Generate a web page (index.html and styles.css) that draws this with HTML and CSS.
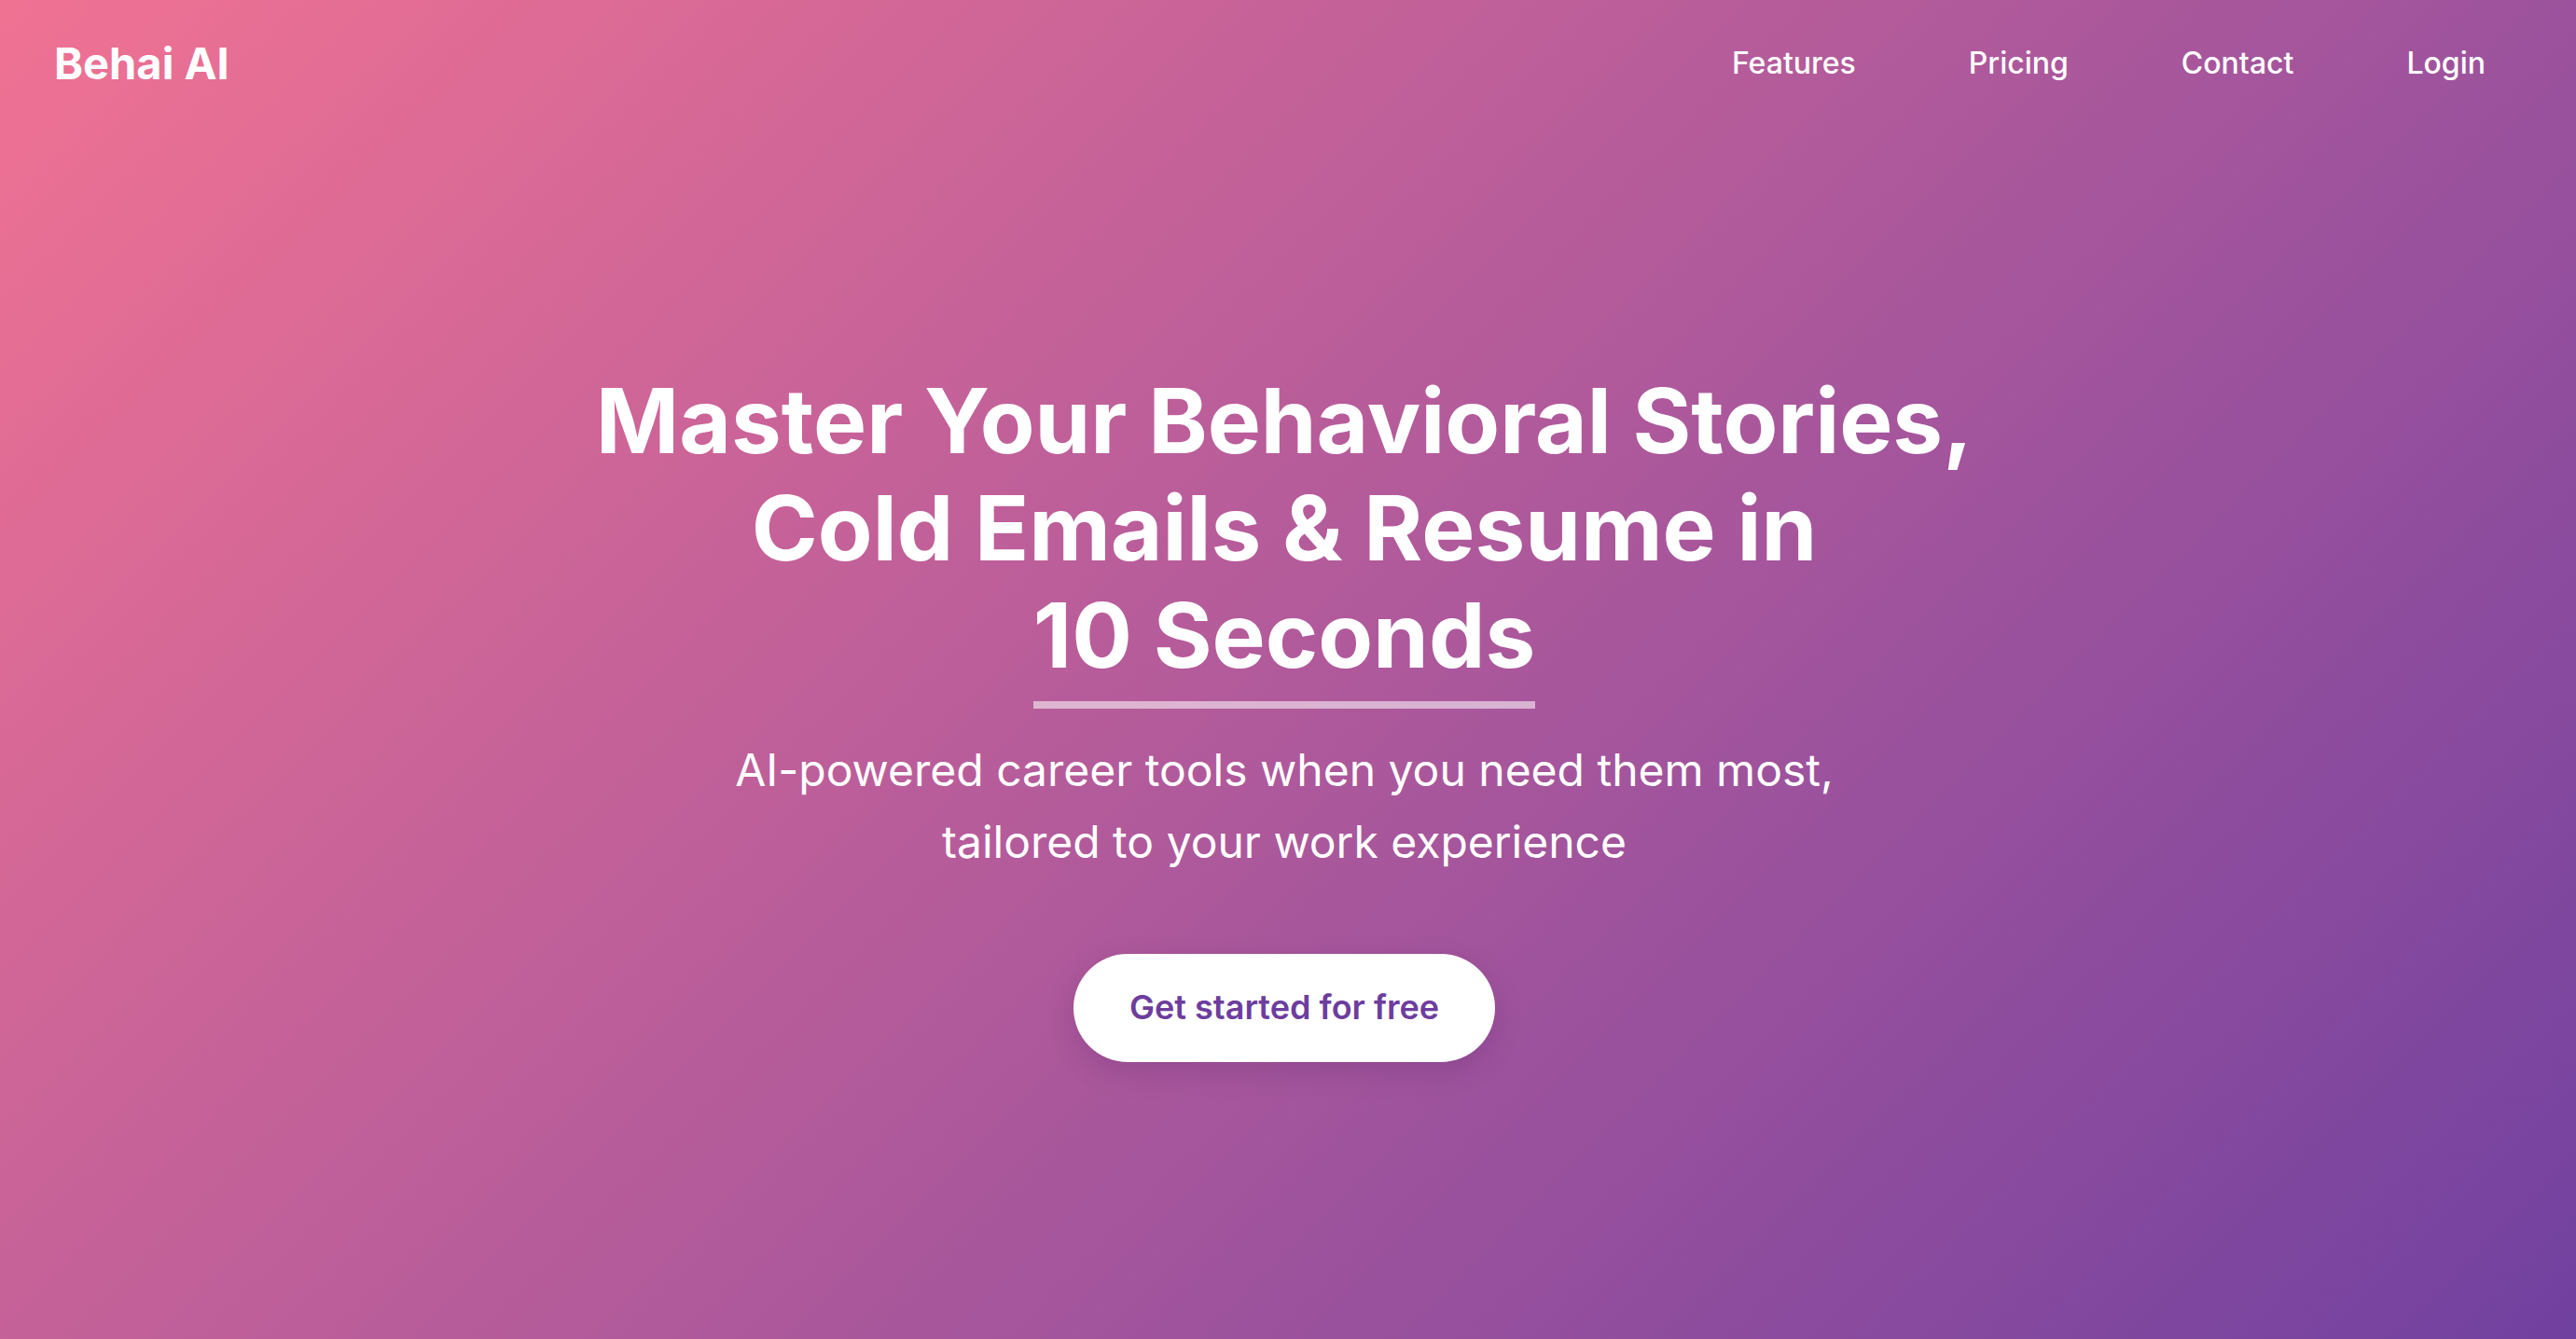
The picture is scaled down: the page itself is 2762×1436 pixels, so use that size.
FILE: index.html
```html
<!DOCTYPE html>
<html lang="en">
<head>
<meta charset="utf-8">
<title>Behai AI</title>
<link rel="stylesheet" href="styles.css">
</head>
<body>
<div class="page">
  <header class="header">
    <div class="logo">Behai AI</div>
    <nav class="nav">
      <a href="#" class="nav-link">Features</a>
      <a href="#" class="nav-link">Pricing</a>
      <a href="#" class="nav-link">Contact</a>
      <a href="#" class="nav-link">Login</a>
    </nav>
  </header>
  <main class="hero">
    <h1 class="title">Master Your Behavioral Stories, Cold Emails &amp; Resume in <span class="highlight">10 Seconds</span></h1>
    <p class="subtitle">AI-powered career tools when you need them most, tailored to your work experience</p>
    <div class="cta-wrap">
      <a href="#" class="cta">Get started for free</a>
    </div>
  </main>
</div>
</body>
</html>
```

FILE: styles.css
```css
html, body {
  margin: 0;
  padding: 0;
}
body {
  font-family: Inter, "Noto Sans", "Liberation Sans", sans-serif;
  color: #ffffff;
}
.page {
  min-height: 100vh;
  background: linear-gradient(135deg, #f07293 0%, #b15a9b 50%, #7141a0 100%);
  box-sizing: border-box;
}
.header {
  display: flex;
  justify-content: space-between;
  align-items: center;
  padding: 40px 97px 0 58px;
}
.logo {
  font-size: 47px;
  font-weight: 700;
  line-height: 1.21;
}
.nav {
  display: flex;
  gap: 121px;
}
.nav-link {
  color: #ffffff;
  text-decoration: none;
  font-size: 32px;
  font-weight: 500;
  line-height: 1.21;
}
.hero {
  padding-top: 297px;
  padding-right: 8px;
  text-align: center;
}
.title {
  margin: 0 auto;
  max-width: 1540px;
  font-size: 96px;
  font-weight: 700;
  line-height: 1.2;
}
.highlight {
  display: inline-block;
}
.highlight::after {
  content: "";
  display: block;
  height: 8px;
  margin-top: 13px;
  background: rgba(255, 255, 255, 0.55);
}
.subtitle {
  margin: 28px auto 0;
  max-width: 1260px;
  font-size: 48px;
  font-weight: 400;
  line-height: 1.6;
}
.cta-wrap {
  margin-top: 81px;
}
.cta {
  display: inline-block;
  padding: 36px 60px;
  background: #ffffff;
  color: #6d3d9e;
  border-radius: 999px;
  font-size: 36px;
  font-weight: 600;
  line-height: 1.21;
  text-decoration: none;
  box-shadow: 0 10px 30px rgba(60, 20, 90, 0.18);
}
```
